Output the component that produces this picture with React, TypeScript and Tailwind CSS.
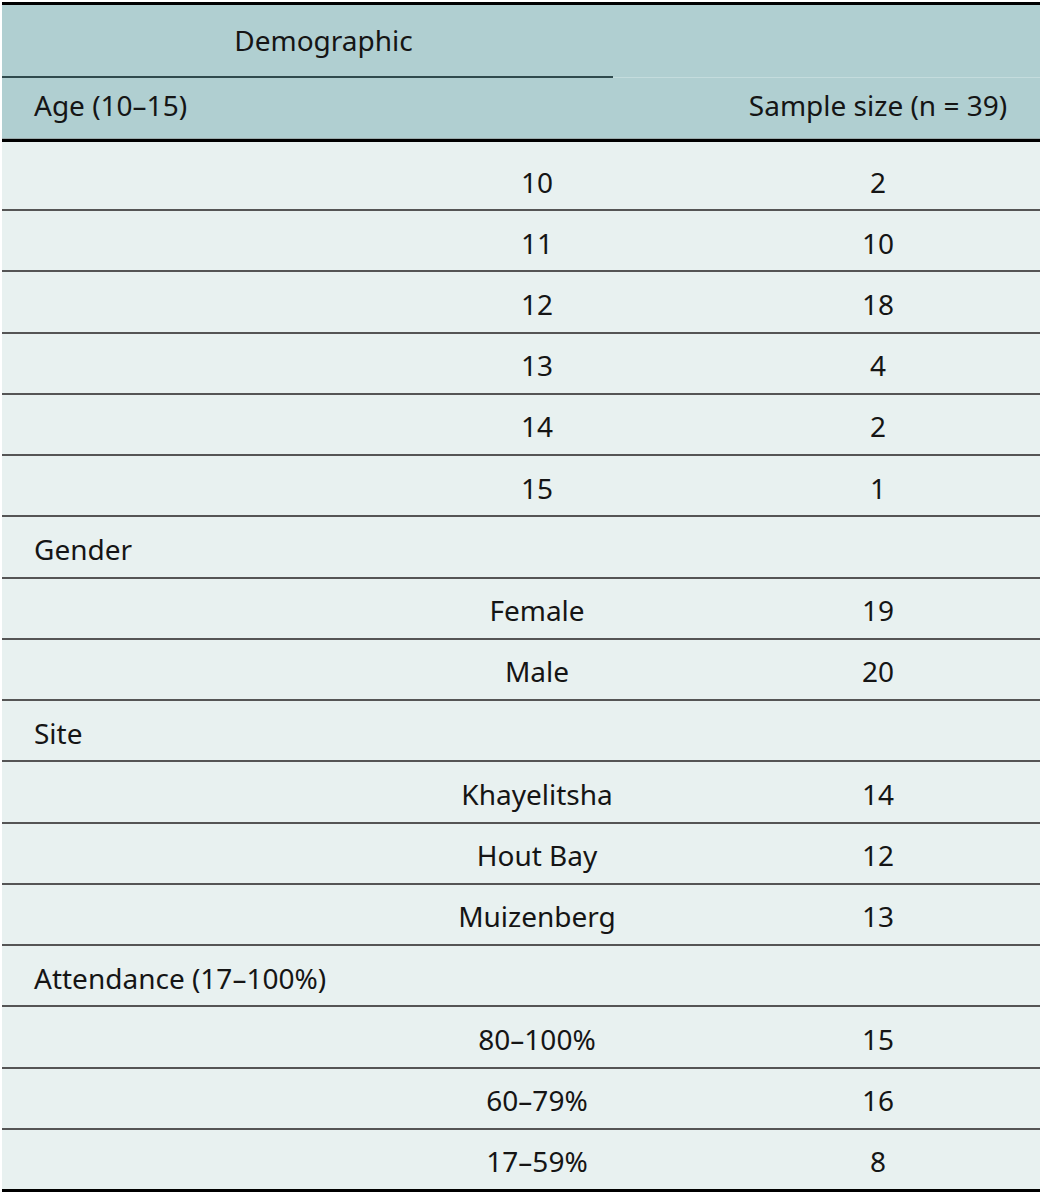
import React from "react";

type Row = { label?: string; mid?: string; val?: string };

const rows: Row[] = [
  { mid: "10", val: "2" },
  { mid: "11", val: "10" },
  { mid: "12", val: "18" },
  { mid: "13", val: "4" },
  { mid: "14", val: "2" },
  { mid: "15", val: "1" },
  { label: "Gender" },
  { mid: "Female", val: "19" },
  { mid: "Male", val: "20" },
  { label: "Site" },
  { mid: "Khayelitsha", val: "14" },
  { mid: "Hout Bay", val: "12" },
  { mid: "Muizenberg", val: "13" },
  { label: "Attendance (17–100%)" },
  { mid: "80–100%", val: "15" },
  { mid: "60–79%", val: "16" },
  { mid: "17–59%", val: "8" },
];

export default function App() {
  return (
    <div
      className="w-[1042px] bg-white pt-[2px] text-[28px] leading-none text-[#151515]"
      style={{ fontFamily: '"Noto Sans", "Open Sans", sans-serif' }}
    >
      <div className="mx-[2px] w-[1038px]">
        {/* Header */}
        <div className="border-t-[3px] border-black bg-[#b0cfd1]">
          <div className="flex">
            <div className="flex h-[73px] w-[611px] items-center justify-center border-b-2 border-[#2f4a4d] pl-8 pb-[2px]">
              Demographic
            </div>
            <div className="flex-1 border-b border-[#c4dcdd]" />
          </div>
          <div className="grid h-[61px] grid-cols-[356px_358px_1fr] items-center border-b border-[#9aa9aa] pb-[6px]">
            <div className="pl-8">Age (10–15)</div>
            <div />
            <div className="text-center">Sample size (n = 39)</div>
          </div>
        </div>
        <div className="border-t-[3px] border-black bg-[#e8f1f0]">
          {rows.map((r, i) => {
            const last = i === rows.length - 1;
            const first = i === 0;
            return (
              <div
                key={i}
                className={
                  "grid grid-cols-[356px_358px_1fr] items-center " +
                  (first ? "h-[69px] pt-[12px] " : last ? "h-[62px] pt-[4px] " : "h-[61.25px] pt-[4px] ") +
                  (last ? "border-b-[3px] border-black" : "border-b-2 border-[#555]")
                }
              >
                <div className="pl-8">{r.label ?? ""}</div>
                <div className="text-center">{r.mid ?? ""}</div>
                <div className="text-center">{r.val ?? ""}</div>
              </div>
            );
          })}
        </div>
      </div>
    </div>
  );
}
